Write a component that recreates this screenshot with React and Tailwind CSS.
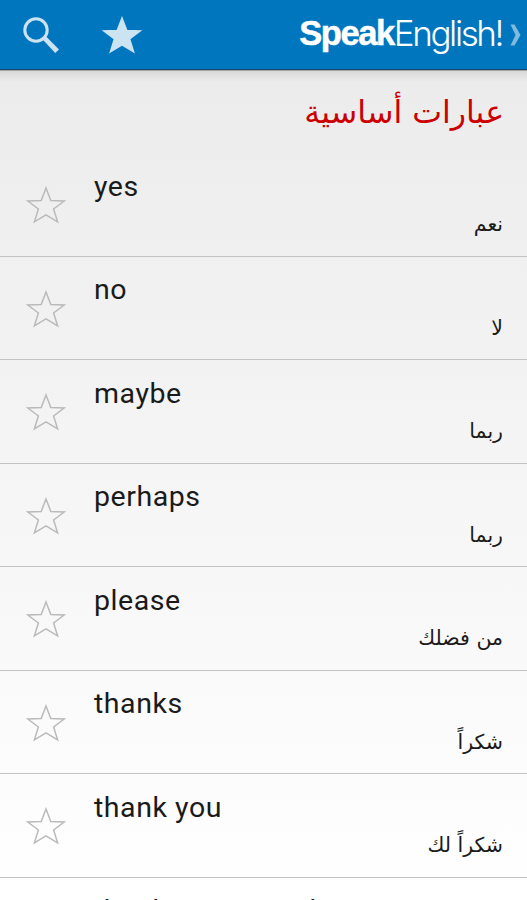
const phrases = [
  { en: 'yes', ar: 'نعم' },
  { en: 'no', ar: 'لا' },
  { en: 'maybe', ar: 'ربما' },
  { en: 'perhaps', ar: 'ربما' },
  { en: 'please', ar: 'من فضلك' },
  { en: 'thanks', ar: 'شكراً' },
  { en: 'thank you', ar: 'شكراً لك' },
  { en: 'thanks very much', ar: '' },
];

const SearchIcon = () => (
  <svg className="h-[38px] w-[38px]" viewBox="0 0 38 38" fill="none">
    <circle cx="14" cy="14" r="11.2" stroke="#cce3f2" strokeWidth="3" />
    <path d="M21.4 24.2L24.3 20.8L37 33.4L33.2 37Z" fill="#cce3f2" />
  </svg>
);

const Star = ({ filled }) => (
  <svg className="block h-[38px] w-[40px]" viewBox="0 0 40 38">
    <path
      d="M20 2L24.8 14.4L38.2 15L27.6 23L31.6 35.8L20 28.9L8.4 35.8L12.4 23L1.8 15L15.2 14.4Z"
      fill={filled ? '#cce3f2' : 'none'}
      stroke={filled ? '#cce3f2' : '#b9babc'}
      strokeWidth={filled ? 1.5 : 1.5}
    />
  </svg>
);

const PhraseRow = ({ en, ar }) => (
  <li className="flex h-[103.5px] shrink-0 border-b border-[#c3c3c3]">
    <button className="flex w-[94px] shrink-0 items-start pt-[33px] pl-[26px]" aria-label="Favorite">
      <Star />
    </button>
    <div className="flex-1 pr-6">
      <p className="pt-[16.5px] text-[28.5px] leading-[34px] tracking-[0.55px] text-[#1a1a1a]">{en}</p>
      <p
        dir="rtl"
        className="pt-[4.5px] font-['DejaVu_Sans',sans-serif] text-[20.5px] leading-[32px] text-[#1a1a1a]"
      >
        {ar}
      </p>
    </div>
  </li>
);

const App = () => {
  return (
    <div className="flex h-[900px] w-full flex-col overflow-hidden bg-linear-to-b from-[#eaeaea] to-white font-[Roboto,sans-serif]">
      <header className="flex h-[70px] shrink-0 items-start border-b border-[#17476f] bg-[#0076bf]">
        <button className="mt-[16px] ml-[22px]" aria-label="Search">
          <SearchIcon />
        </button>
        <button className="mt-[16px] ml-[42px]" aria-label="Favorites">
          <Star filled />
        </button>
        <div className="mt-[13px] mr-[6px] ml-auto flex items-center text-white">
          <span className="font-['Liberation_Sans',sans-serif] text-[34.5px] leading-[40px] font-bold tracking-[-1.4px] [-webkit-text-stroke:0.5px_white]">
            Speak
          </span>
          <span className="font-[Inter,sans-serif] text-[35px] leading-[40px] font-light tracking-[-2.4px]">
            English!
          </span>
          <svg className="mt-[3px] ml-[8px] h-[22px] w-[11px]" viewBox="0 0 11 22">
            <path d="M0.5 0.5H4.5L10.5 11L4.5 21.5H0.5L5.5 11Z" fill="#7fbadf" />
          </svg>
        </div>
      </header>
      <div className="h-[12px] shrink-0 border-t border-[#a5a5a5] bg-linear-to-b from-black/8 to-transparent" />

      <h1
        dir="rtl"
        className="h-[71px] shrink-0 pt-[8px] pr-[23px] font-['DejaVu_Sans',sans-serif] text-[31.6px] leading-[44px] text-[#cc0000]"
      >
        عبارات أساسية
      </h1>

      <ul className="flex flex-col">
        {phrases.map((phrase) => (
          <PhraseRow key={phrase.en} {...phrase} />
        ))}
      </ul>
    </div>
  );
};

export default App;
